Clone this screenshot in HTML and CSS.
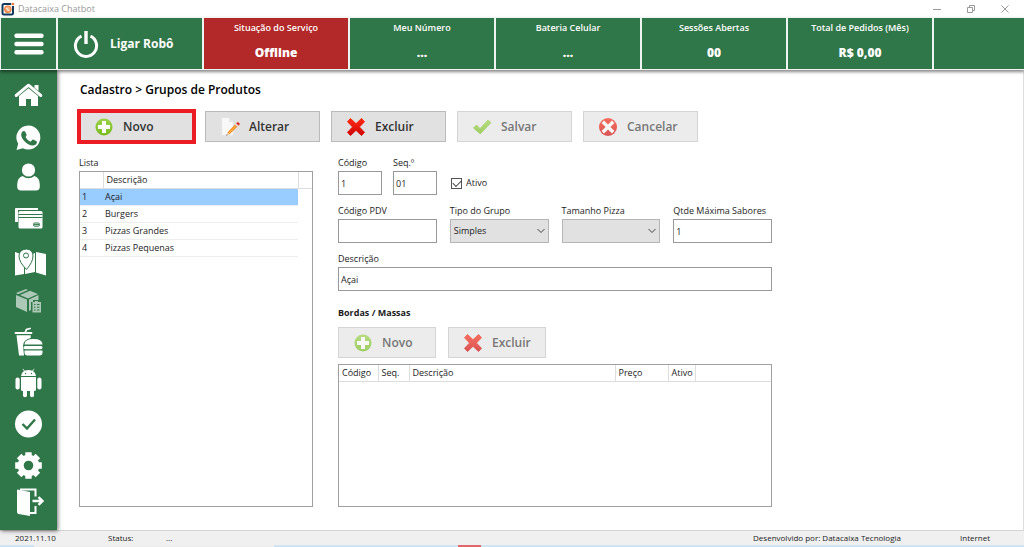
FILE: index.html
```html
<!DOCTYPE html>
<html lang="pt-BR">
<head>
<meta charset="utf-8">
<meta name="viewport" content="width=device-width, initial-scale=1">
<title>Datacaixa Chatbot</title>
<link rel="stylesheet" href="styles.css">
</head>
<body>
<svg class="defs" aria-hidden="true">
  <defs>
    <linearGradient id="green" x1="0" y1="0" x2="0" y2="1"><stop offset="0" stop-color="#9bd24a"/><stop offset="1" stop-color="#78bd1c"/></linearGradient>
    <linearGradient id="red" x1="0" y1="0" x2="0" y2="1"><stop offset="0" stop-color="#ff2a12"/><stop offset="1" stop-color="#cf0505"/></linearGradient>
    <symbol id="i-add" viewBox="0 0 20 20"><circle cx="10" cy="10" r="8.5" fill="url(#green)"/><path d="M8 4h4v4h4v4h-4v4H8v-4H4V8h4z" fill="#fff"/></symbol>
    <symbol id="i-edit" viewBox="0 0 20 20"><path d="M2 1h7l4 4v13H2z" fill="#f8f8f8" stroke="#ececec" stroke-width=".6"/><path d="M9 1v4h4" fill="#e4e4e4"/><path d="M7.500 15.500 15 7.500l2.300 2.200L9.500 17.300z" fill="#f58a1f"/><path d="m8.500 16.400 7.700-7.800" stroke="#ffc05a" stroke-width="1"/><path d="m15 7.500 1.200-1.200 2.300 2.200-1.200 1.200z" fill="#d8d8d8"/><path d="m16.200 6.300.9-.9q1.200-.5 2.100.6t.2 1.700l-.9.800z" fill="#e2231a"/><path d="m7.500 15.500 2 1.800-3 1.200z" fill="#ecc99b"/><path d="m6.900 17.200.7.700-1.400.8z" fill="#333"/></symbol>
    <symbol id="i-del" viewBox="0 0 20 20"><path d="M4.500 1.500 10 6.700l5.500-5.200 3 3.200L13.400 10l5.100 5.300-3 3.200L10 13.300l-5.500 5.200-3-3.200L6.600 10 1.500 4.700z" fill="url(#red)" stroke="url(#red)" stroke-width="1" stroke-linejoin="round"/></symbol>
    <symbol id="i-ok" viewBox="0 0 20 20"><path d="m1.500 11 3-3 3.500 3.700L16 3l3 2.700L8.200 16.700z" fill="url(#green)" stroke="url(#green)" stroke-linejoin="round"/></symbol>
    <symbol id="i-cancel" viewBox="0 0 20 20"><circle cx="10" cy="10" r="9" fill="url(#red)"/><path d="m6 6 8 8m0-8-8 8" stroke="#fff" stroke-width="3.400" stroke-linecap="square"/></symbol>
  </defs>
</svg>
<div class="app">
  <header class="titlebar">
    <svg class="logo" viewBox="0 0 14 14" aria-hidden="true"><rect x="1.500" y="2" width="10.500" height="10.500" rx="1.500" fill="#fff" stroke="#123a5c" stroke-width="2"/><circle cx="6.800" cy="7.200" r="3.200" fill="#f9b184" stroke="#ef7a35" stroke-width="1.200"/><path d="m4 10.500.3-2 1.500 1.500z" fill="#ef7a35"/><path d="M5.500 5.800q.5 2.300 2.700 2.700" stroke="#fff" fill="none"/><rect x="10.200" y="0" width="3.500" height="4" fill="#fff"/><circle cx="12" cy="2" r="1.300" fill="#ef7a35"/></svg>
    <h1 class="app-name">Datacaixa Chatbot</h1>
    <button class="win" aria-label="Minimizar"><svg viewBox="0 0 12 12"><path d="M2 6.500h8"/></svg></button>
    <button class="win" aria-label="Restaurar"><svg viewBox="0 0 12 12"><path d="M2.500 4.500h5v5h-5zM4.500 4.500v-2h5v5h-2"/></svg></button>
    <button class="win" aria-label="Fechar"><svg viewBox="0 0 12 12"><path d="m2.500 2.500 7 7m0-7-7 7"/></svg></button>
  </header>

  <section class="topbar">
    <button class="tile" aria-label="Menu"><svg class="burger" viewBox="0 0 30 22"><path d="M2.500 2.800h25M2.500 11h25M2.500 19.200h25" stroke="#fff" stroke-width="4.400" stroke-linecap="round"/></svg></button>
    <button class="tile robot"><svg class="power" viewBox="0 0 26 28" aria-hidden="true"><path d="M8.500 6.200a10.600 10.600 0 1 0 9 0" fill="none" stroke="#fff" stroke-width="3"/><path d="M13 1v13" stroke="#fff" stroke-width="3.400"/></svg>Ligar Robô</button>
    <div class="tile stat offline"><span>Situação do Serviço</span><strong>Offline</strong></div>
    <div class="tile stat"><span>Meu Número</span><strong>...</strong></div>
    <div class="tile stat"><span>Bateria Celular</span><strong>...</strong></div>
    <div class="tile stat"><span>Sessões Abertas</span><strong>00</strong></div>
    <div class="tile stat"><span>Total de Pedidos (Mês)</span><strong>R$ 0,00</strong></div>
    <div class="tile"></div>
  </section>

  <div class="body">
    <nav class="sidebar" aria-label="Principal">
      <button aria-label="Início"><svg viewBox="0 0 56 41"><path d="M28.500 13.200 38 21v10h-7v-7h-5v7h-7V21z"/><path d="M16.200 20.500 28.500 10.200l12.300 10.300" fill="none" stroke="#fff" stroke-width="3" stroke-linecap="round" stroke-linejoin="round"/><path d="M34.500 10h4v6l-4-3.300z"/></svg></button>
      <button aria-label="WhatsApp"><svg viewBox="0 0 56 41"><path d="M28.500 9.500a12 12 0 1 1-5.600 22.700L16.500 34l1.700-6.300A12 12 0 0 1 28.500 9.500z"/><path class="cut" d="M22.500 15.600q1.400-1.200 2.600 0l1.500 3.200q.2.700-1.100 2.100 1.700 3.400 5.100 4.800l1.800-1.900q.5-.4 1.200-.1l3 1.500q.6.600.1 2.100-1 2.200-4 2.200-4.600-.4-8.200-4.300-3.400-3.700-3.300-6.800.2-1.800 1.300-2.800z"/></svg></button>
      <button aria-label="Clientes"><svg viewBox="0 0 56 41"><circle cx="28.500" cy="13" r="6.600"/><path d="M22.500 19q6 4.500 12 0 5.300 1.800 5.300 8.500v2.300q0 3.700-3.800 3.700H21q-3.800 0-3.800-3.700v-2.300q0-6.700 5.300-8.500z"/></svg></button>
      <button aria-label="Pagamentos"><svg viewBox="0 0 56 41"><path d="M16 10h22v2H18v12h-3V11q0-1 1-1z"/><rect x="18.500" y="13" width="24" height="17.500" rx="1.500"/><path class="line" d="M18.500 16.500h24M18.500 19.500h24"/><rect class="line" x="33.500" y="25" width="6" height="3.200" rx="1.300"/><path class="line" d="M34 26.600h5"/></svg></button>
      <button aria-label="Entregas"><svg viewBox="0 0 56 41"><path d="m15 13 9 3v19l-9 1.500zM25 18l10-4v19l-10 2zM36 13l10 2v21.500L36 33.500z"/><path class="pin" d="M26.500 10q6.500.5 6.500 7 0 6-6.500 13.500Q19 23 19 17q0-6.500 7.500-7z"/><circle class="line" cx="26" cy="16.500" r="2.500"/></svg></button>
      <button class="current" aria-label="Produtos"><svg viewBox="0 0 56 41"><path d="m16 13 10-4 2 1-10 4.300zM20 15l10-4.300 8 3.300-10 4.500z"/><path d="M16 15l11 4.500V32l-11-5z"/><path d="M29 19.500 38.500 15v5H33v2h-2v8l-2 1z"/><path d="M32.500 22H35v-1h3v1h3v10.500h-8.500z"/><path class="line" d="M34 24.500h1.500M37 24.500h2.500M34 27.200h1.500M37 27.200h2.500M34 30h1.500M37 30h2.500"/></svg></button>
      <button aria-label="Lanches"><svg viewBox="0 0 56 41"><path d="M15.500 12h16M25 12l1.500-3.500 3.500-1" fill="none" stroke="#fff" stroke-width="1.800" stroke-linecap="round"/><path d="M16.500 14.200h14.300l-.2 2.800q-7.600 2-7.600 8l1 9.500h-5z"/><path d="M24.500 23.500q0-5.500 9-5.500t9 5.500zM24.500 29.500h18v2q0 3-3 3h-12q-3 0-3-3z"/><rect x="23.500" y="25" width="19" height="3.200" rx="1.600"/></svg></button>
      <button aria-label="Aplicativo"><svg viewBox="0 0 56 41"><path d="M21 14q0-3 3-5l-1.500-2 .5-.3 1.800 2q3.700-1.300 7.400 0l1.800-2 .5.300L33 9q3 2 3 5z"/><path d="M21 15h15v12.500q0 1.500-1.500 1.500H34v4.500q0 1.700-2 1.700t-2-1.700V29h-3v4.500q0 1.700-2 1.700t-2-1.700V29h-.5q-1.500 0-1.500-1.500z"/><rect x="15.500" y="15.500" width="4.200" height="12" rx="2.100"/><rect x="37.300" y="15.500" width="4.200" height="12" rx="2.100"/><circle class="cut" cx="25.500" cy="11.500" r=".7"/><circle class="cut" cx="31.500" cy="11.500" r=".7"/></svg></button>
      <button aria-label="Confirmações"><svg viewBox="0 0 56 41"><circle cx="28.500" cy="21" r="13.500"/><path d="m22.500 21 4.500 4.500 8-9" fill="none" stroke="#2f7648" stroke-width="2.400"/></svg></button>
      <button aria-label="Configurações"><svg viewBox="0 0 56 41"><circle cx="28.500" cy="21.500" r="7.800" fill="none" stroke="#fff" stroke-width="6"/><path d="M28.500 8.200v4M28.500 30.800v4M15.200 21.500h4M37.800 21.500h4M19.100 12.100l3 3M34.900 27.900l3 3M19.100 30.900l3-3M34.900 15.100l3-3" stroke="#fff" stroke-width="6.400"/></svg></button>
      <button aria-label="Sair"><svg viewBox="0 0 56 41"><path d="M17.500 4.500 30 7v24l-11.500-2q-1.500-.3-1.500-2V5z"/><path d="M20 4.500h15.500v7M35.500 21v7H30" fill="none" stroke="#fff" stroke-width="2"/><path d="M32.500 16h9M38.500 12.200l4 3.800-4 3.800" fill="none" stroke="#fff" stroke-width="2.400"/></svg></button>
    </nav>

    <main class="main">
      <h2 class="crumb">Cadastro &gt; Grupos de Produtos</h2>
      <div class="toolbar">
        <button class="btn highlight"><svg aria-hidden="true"><use href="#i-add"/></svg>Novo</button>
        <button class="btn"><svg aria-hidden="true"><use href="#i-edit"/></svg>Alterar</button>
        <button class="btn"><svg aria-hidden="true"><use href="#i-del"/></svg>Excluir</button>
        <button class="btn" disabled><svg aria-hidden="true"><use href="#i-ok"/></svg>Salvar</button>
        <button class="btn" disabled><svg aria-hidden="true"><use href="#i-cancel"/></svg>Cancelar</button>
      </div>

      <div class="columns">
        <section class="list">
          <h3 class="caption" id="lista">Lista</h3>
          <div class="frame">
            <table class="grid groups" aria-labelledby="lista">
              <colgroup><col class="c-num"><col><col class="c-end"></colgroup>
              <thead><tr><th></th><th>Descrição</th><th></th></tr></thead>
              <tbody>
                <tr class="selected"><td>1</td><td>Açai</td></tr>
                <tr><td>2</td><td>Burgers</td></tr>
                <tr><td>3</td><td>Pizzas Grandes</td></tr>
                <tr><td>4</td><td>Pizzas Pequenas</td></tr>
              </tbody>
            </table>
          </div>
        </section>

        <form class="form">
          <div class="row ids">
            <div class="field"><label for="codigo">Código</label><input id="codigo" type="text" value="1"></div>
            <div class="field"><label for="seq">Seq.º</label><input id="seq" type="text" value="01"></div>
            <label class="check"><input type="checkbox" checked>Ativo</label>
          </div>
          <div class="row four">
            <div class="field"><label for="pdv">Código PDV</label><input id="pdv" type="text"></div>
            <div class="field"><label for="tipo">Tipo do Grupo</label>
              <div class="select"><select id="tipo"><option>Simples</option></select><svg viewBox="0 0 10 6" aria-hidden="true"><path d="m1.500 1 3.500 3.500L8.500 1"/></svg></div></div>
            <div class="field"><label for="tamanho">Tamanho Pizza</label>
              <div class="select"><select id="tamanho"><option></option></select><svg viewBox="0 0 10 6" aria-hidden="true"><path d="m1.500 1 3.500 3.500L8.500 1"/></svg></div></div>
            <div class="field"><label for="qtde">Qtde Máxima Sabores</label><input id="qtde" type="text" value="1"></div>
          </div>
          <div class="field"><label for="descricao">Descrição</label><input id="descricao" type="text" value="Açai"></div>
          <h3 class="caption strong" id="bordas">Bordas / Massas</h3>
          <div class="toolbar small">
            <button type="button" class="btn" disabled><svg aria-hidden="true"><use href="#i-add"/></svg>Novo</button>
            <button type="button" class="btn" disabled><svg aria-hidden="true"><use href="#i-del"/></svg>Excluir</button>
          </div>
          <div class="frame">
            <table class="grid edges" aria-labelledby="bordas">
              <colgroup><col class="c-code"><col class="c-seq"><col><col class="c-price"><col class="c-active"><col class="c-rest"></colgroup>
              <thead><tr><th>Código</th><th>Seq.</th><th>Descrição</th><th>Preço</th><th>Ativo</th><th></th></tr></thead>
            </table>
          </div>
        </form>
      </div>
    </main>
  </div>

  <footer class="status">
    <span class="version">2021.11.10</span><span class="state">Status:</span><span>...</span>
    <span class="dev">Desenvolvido por: Datacaixa Tecnologia</span><span class="net">Internet</span>
  </footer>
  <div class="taskbar"><div class="task-open"></div><div class="task-alert"></div></div>
</div>
</body>
</html>
```

FILE: styles.css
```css
* { box-sizing: border-box; }

body {
  margin: 0;
  background: #fff;
  color: #1c1c1c;
  font: 9px/12px "Open Sans", "Noto Sans", sans-serif;
}

button, input, select { font: inherit; color: inherit; margin: 0; }
button { border: 0; padding: 0; background: none; }
h1, h2, h3 { margin: 0; font-size: inherit; }
.defs { position: absolute; width: 0; height: 0; }

.app { display: flex; flex-direction: column; min-height: 100vh; }

/* Window title */
.titlebar { display: flex; align-items: center; height: 17px; padding: 0 13px 0 1px; }
.logo { width: 14px; height: 14px; }
.app-name { flex: 1; padding-left: 3px; font-weight: 400; color: #999; }
.win { width: 12px; height: 12px; margin-left: 22px; }
.win svg { display: block; width: 12px; height: 12px; fill: none; stroke: #999; stroke-width: 1; }

/* Status tiles */
.topbar {
  position: relative;
  z-index: 2;
  display: grid;
  grid-template-columns: 55px repeat(6, minmax(0, 144fr)) minmax(0, 90fr);
  gap: 2px;
  height: 53px;
  padding: 1px 0 1px 1px;
  background: #eef4f0;
  box-shadow: 0 2px 3px #0007;
}
.tile {
  display: flex;
  align-items: center;
  justify-content: center;
  background: #2f7648;
  color: #fff;
}
.burger { width: 30px; height: 22px; }
.robot { justify-content: flex-start; gap: 11px; padding-left: 15px; font-size: 12px; font-weight: 700; }
.power { width: 26px; height: 28px; }
.stat { flex-direction: column; justify-content: flex-start; gap: 11px; padding-top: 4px; font-weight: 600; }
.stat strong { font-size: 12px; line-height: 16px; font-variant-ligatures: none; }
.offline { background: #b32828; }

.body { display: flex; flex: 1; }

/* Navigation */
.sidebar {
  position: relative;
  z-index: 1;
  flex: none;
  width: 57px;
  padding: 5px 0 4px;
  background: #2f7648;
  box-shadow: 1px 1px 4px #0008;
}
.sidebar button { display: block; width: 56px; height: 41px; }
.sidebar svg { display: block; width: 56px; height: 41px; fill: #fff; }
.sidebar .cut { fill: #2f7648; }
.sidebar .line { fill: none; stroke: #2f7648; stroke-width: 1; }
.sidebar .pin { stroke: #2f7648; stroke-width: 1; }
.sidebar .current { opacity: .6; }

/* Content */
.main {
  display: flex;
  flex: 1;
  flex-direction: column;
  padding: 12px 24px 23px 22px;
  border-right: 1px solid #ddd;
}
.crumb { font-size: 12px; line-height: 16px; font-weight: 600; color: #000; padding-left: 1px; }
.toolbar { display: flex; gap: 11px; margin-top: 13px; }
.btn {
  display: flex;
  align-items: center;
  gap: 9px;
  width: 115px;
  height: 31px;
  padding-left: 14px;
  border: 1px solid #bababa;
  background: #e1e1e1;
  color: #333;
  font-size: 12px;
  font-weight: 600;
}
.btn svg { width: 20px; height: 20px; }
.btn:disabled { border-color: #d5d5d5; background: #ececec; color: #777; }
.btn:disabled svg { opacity: .65; }
.highlight { outline: 4px solid #ec1c24; outline-offset: -2px; }

.columns {
  display: grid;
  flex: 1;
  grid-template-columns: 234px minmax(0, 434px);
  gap: 25px;
  margin-top: 15px;
}
.list, .form { display: flex; flex-direction: column; }
.caption { font-weight: 400; line-height: 12px; }
.strong { margin-top: 16px; font-weight: 700; }
.frame { flex: 1; margin-top: 2px; border: 1px solid #a0a0a0; }
.form .frame { margin-top: 6px; }

.grid { width: 100%; border-collapse: collapse; table-layout: fixed; }
.grid th {
  height: 16px;
  padding: 0 0 0 3px;
  border-right: 1px solid #ddd;
  border-bottom: 1px solid #ddd;
  font-weight: 400;
  text-align: left;
}
.grid th:last-child { border-right: 0; }
.grid td { height: 17px; padding: 0 0 0 2px; border-bottom: 1px solid #eee; }
.selected td { background: #99ccff; }
.c-num { width: 23px; }
.c-end { width: 14px; }
.c-code { width: 39px; }
.c-seq { width: 31px; }
.c-price { width: 53px; }
.c-active { width: 27px; }
.c-rest { width: 76px; }

.row { display: grid; margin-bottom: 10px; }
.ids { grid-template-columns: 44px 44px auto; justify-content: start; gap: 11px; }
.four { grid-template-columns: repeat(4, minmax(0, 1fr)); gap: 13px; }
.field { display: flex; flex-direction: column; gap: 2px; white-space: nowrap; }
.field input, .select select {
  width: 100%;
  height: 24px;
  padding: 0 2px;
  border: 1px solid #999;
  border-radius: 0;
  background: #fff;
}
.select { display: grid; align-items: center; }
.select select { grid-area: 1 / 1; appearance: none; padding-left: 3px; border-color: #b5b5b5; background: #e1e1e1; }
.select svg {
  grid-area: 1 / 1;
  justify-self: end;
  width: 10px;
  height: 6px;
  margin-right: 3px;
  fill: none;
  stroke: #444;
  pointer-events: none;
}
.check { display: flex; align-items: center; gap: 4px; padding: 14px 0 0 3px; }
.check input {
  display: grid;
  place-items: center;
  width: 11px;
  height: 11px;
  border: 1px solid #555;
  appearance: none;
}
.check input:checked::before {
  content: "";
  width: 7px;
  height: 4px;
  border: solid #444;
  border-width: 0 0 1px 1px;
  transform: translateY(-1px) rotate(-45deg);
}
.small { gap: 12px; margin-top: 8px; }
.small .btn { width: 98px; }

/* Footer */
.status {
  display: flex;
  align-items: center;
  height: 15px;
  padding: 0 34px 0 15px;
  border-top: 1px solid #d5d5d5;
  background: #f0f0f0;
  font-size: 8px;
}
.version { width: 93px; }
.state { width: 58px; }
.dev { margin-left: auto; }
.net { margin-left: 59px; }
.taskbar { display: flex; height: 2px; background: #cfe3f2; }
.task-open { width: 240px; margin-left: 34px; background: #eee; }
.task-alert { width: 23px; margin-left: 184px; background: #e2676b; }
```
